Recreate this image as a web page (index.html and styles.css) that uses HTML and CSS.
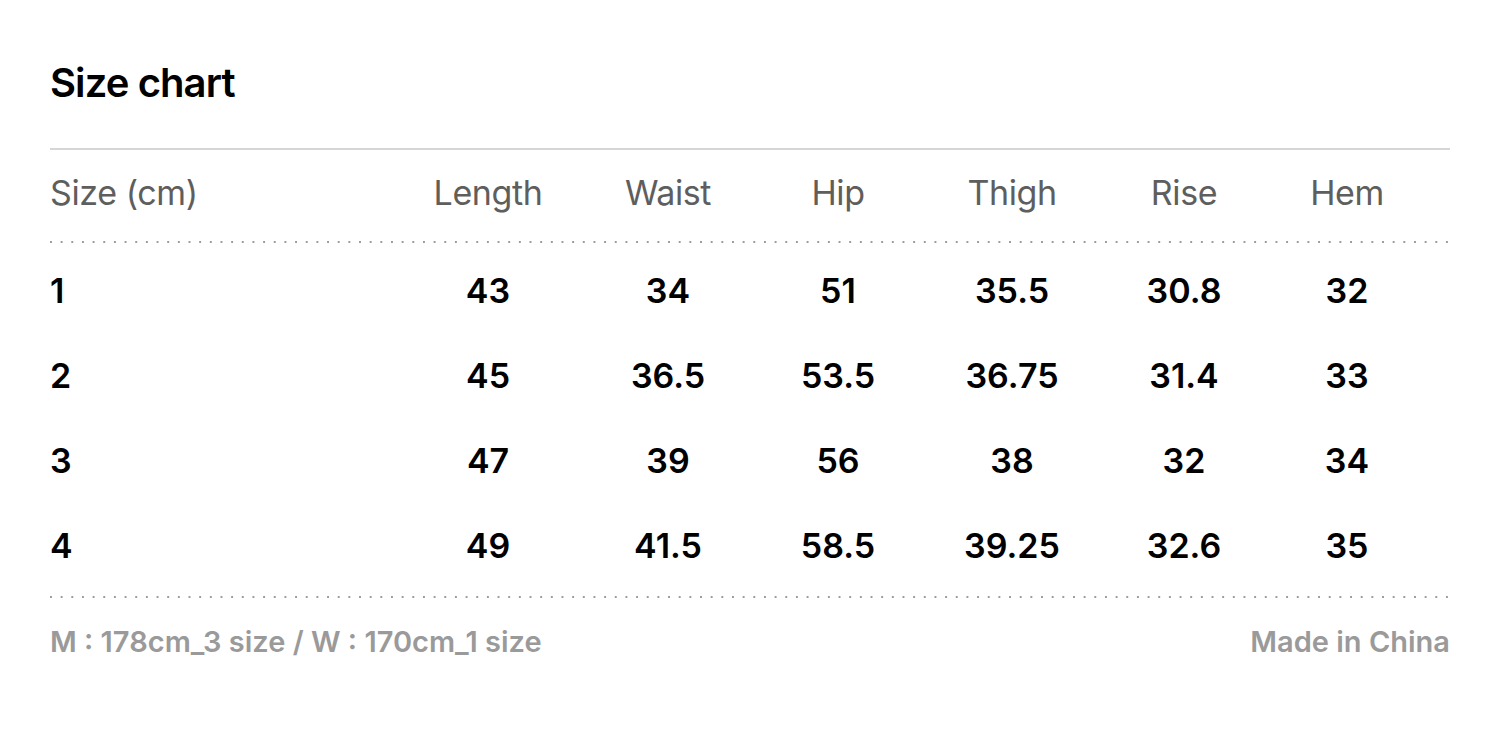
FILE: index.html
```html
<!DOCTYPE html>
<html lang="en">
<head>
<meta charset="utf-8">
<title>Size chart</title>
<link rel="stylesheet" href="styles.css">
</head>
<body>
<main class="chart">
  <h1 class="title">Size chart</h1>
  <div class="rule"></div>
  <div class="grid head">
    <div class="cell first">Size (cm)</div>
    <div class="cell">Length</div>
    <div class="cell">Waist</div>
    <div class="cell">Hip</div>
    <div class="cell">Thigh</div>
    <div class="cell">Rise</div>
    <div class="cell">Hem</div>
  </div>
  <div class="dots"></div>
  <div class="body">
    <div class="grid row">
      <div class="cell first">1</div><div class="cell">43</div><div class="cell">34</div><div class="cell">51</div><div class="cell">35.5</div><div class="cell">30.8</div><div class="cell">32</div>
    </div>
    <div class="grid row">
      <div class="cell first">2</div><div class="cell">45</div><div class="cell">36.5</div><div class="cell">53.5</div><div class="cell">36.75</div><div class="cell">31.4</div><div class="cell">33</div>
    </div>
    <div class="grid row">
      <div class="cell first">3</div><div class="cell">47</div><div class="cell">39</div><div class="cell">56</div><div class="cell">38</div><div class="cell">32</div><div class="cell">34</div>
    </div>
    <div class="grid row">
      <div class="cell first">4</div><div class="cell">49</div><div class="cell">41.5</div><div class="cell">58.5</div><div class="cell">39.25</div><div class="cell">32.6</div><div class="cell">35</div>
    </div>
  </div>
  <div class="dots"></div>
  <footer class="foot">
    <span>M : 178cm_3 size / W : 170cm_1 size</span>
    <span>Made in China</span>
  </footer>
</main>
</body>
</html>
```
FILE: styles.css
```css
html, body {
  margin: 0;
  padding: 0;
  background: #ffffff;
}

body {
  font-family: Inter, "Noto Sans", "Liberation Sans", sans-serif;
  color: #000;
}

.chart {
  width: 1400px;
  margin-left: 50px;
  padding-top: 59px;
}

.title {
  margin: 0;
  font-size: 40px;
  line-height: 48px;
  font-weight: 600;
  letter-spacing: -0.9px;
  color: #000;
}

.rule {
  margin-top: 41px;
  height: 2px;
  background: #d6d6d6;
}

.grid {
  display: grid;
  grid-template-columns: 348px 180px 180px 160px 188px 156px 170px;
}

.cell {
  text-align: center;
  font-size: 34px;
  line-height: 41px;
}

.cell.first {
  text-align: left;
}

.head {
  padding-top: 22px;
  padding-bottom: 28px;
}

.head .cell {
  color: #5e5e5e;
  font-weight: 400;
  letter-spacing: -0.4px;
}

.dots {
  height: 2px;
  background-image: linear-gradient(to right, #9c9c9c 0, #9c9c9c 2px, transparent 2px);
  background-size: 10.67px 2px;
  background-repeat: repeat-x;
}

.body {
  padding-top: 5px;
  padding-bottom: 8px;
}

.row .cell {
  font-weight: 600;
  color: #000;
}

.row {
  padding: 22px 0;
}

.foot {
  display: flex;
  justify-content: space-between;
  margin-top: 27px;
  font-size: 29px;
  line-height: 34px;
  font-weight: 600;
  color: #9a9a9a;
}
```
